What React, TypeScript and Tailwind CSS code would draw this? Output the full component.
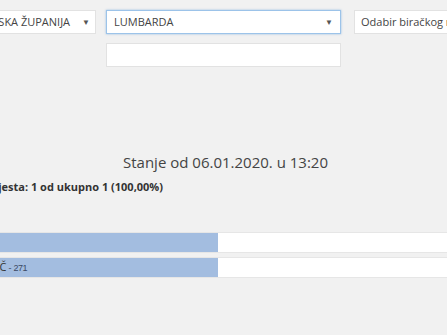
import React from 'react';

const Arrow = () => <span className="text-[8px] text-[#555]">▼</span>;

export default function App() {
  return (
    <div className="w-[447px] h-[335px] overflow-hidden bg-[#f1f1f1] text-[#444]" style={{ fontFamily: '"Open Sans", sans-serif' }}>
      {/* selectors */}
      <div className="flex items-start pt-[10px]">
        <div className="ml-[-139px] w-[235px] h-[24px] shrink-0 flex items-center bg-white border border-[#e2e2e2] pr-[5px]">
          <div className="flex-1 flex justify-end overflow-hidden pr-[12px] text-[11px] whitespace-nowrap">
            DUBROVAČKO-NERETVANSKA ŽUPANIJA
          </div>
          <Arrow />
        </div>
        <div className="ml-[10px] w-[235px] shrink-0 flex flex-col gap-[9px]">
          <div className="h-[24px] flex items-center justify-between bg-white border border-[#9cc3e9] shadow-[0_0_2px_rgba(91,157,217,0.6)] pl-[7px] pr-[7px] text-[11px]">
            <span>LUMBARDA</span>
            <Arrow />
          </div>
          <div className="h-[24px] bg-white border border-[#e2e2e2]" />
        </div>
        <div className="ml-[13px] w-[235px] h-[24px] shrink-0 flex items-center bg-white border border-[#e2e2e2] pl-[6px] text-[11px] whitespace-nowrap">
          Odabir biračkog mjesta
        </div>
      </div>

      <h2 className="mt-[85px] text-center text-[15px] leading-[20px] pl-[4px]">Stanje od 06.01.2020. u 13:20</h2>

      <div className="mt-[8px] w-[163px] flex justify-end whitespace-nowrap text-[11px] font-bold leading-[14px] text-[#333]">
        Obrađeno biračkih mjesta: 1 od ukupno 1 (100,00%)
      </div>

      {/* results */}
      <div className="mt-[38px] flex flex-col gap-[4px]">
        <div className="h-[21px] bg-white border-y border-[#e6e6e6] flex">
          <div className="w-[218px] bg-[#a3bde0]" />
        </div>
        <div className="h-[21px] bg-white border-y border-[#e6e6e6] flex">
          <div className="w-[218px] bg-[#a3bde0] flex items-center overflow-hidden" style={{ fontFamily: '"Liberation Sans", sans-serif' }}>
            <div className="w-[27px] shrink-0 flex items-baseline justify-end whitespace-nowrap text-[9px] text-[#3b4a66]">
              <span className="text-[11px] text-[#333]" style={{ fontFamily: '"Open Sans", sans-serif' }}>IVAN JURIČ</span>
              <span className="ml-[2px]">-</span>
              <span className="ml-[2px] tracking-[-0.5px]">271</span>
            </div>
          </div>
        </div>
      </div>
    </div>
  );
}
